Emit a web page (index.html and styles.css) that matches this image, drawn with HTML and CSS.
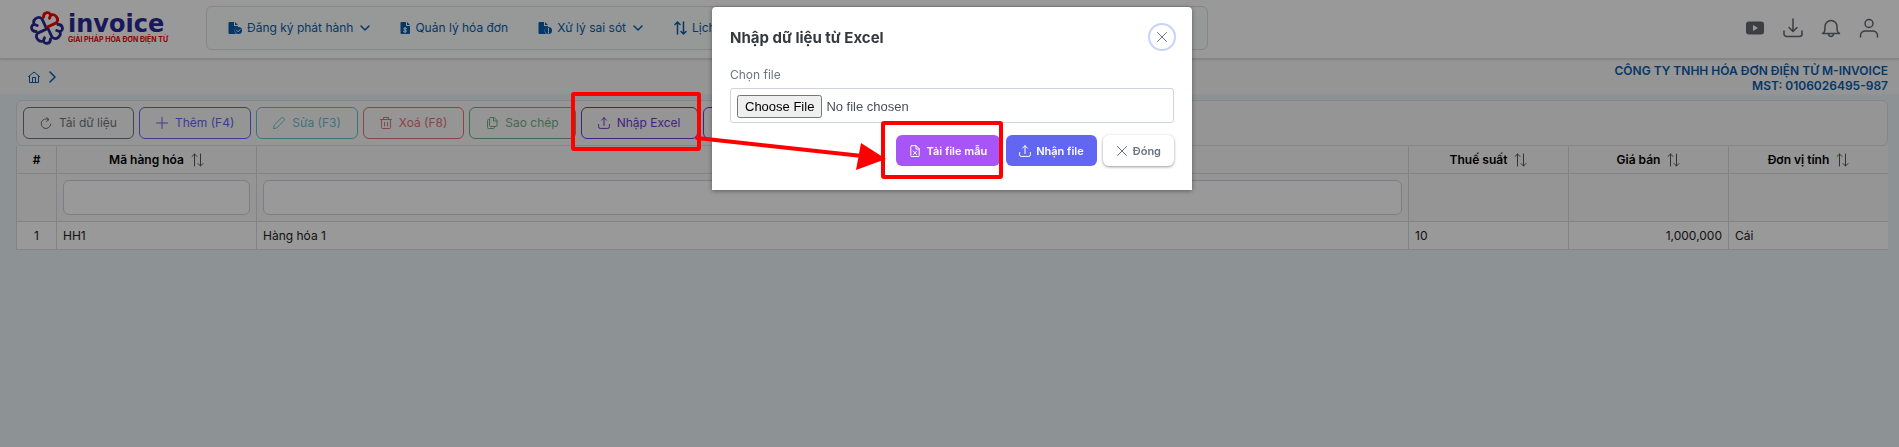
FILE: index.html
```html
<!DOCTYPE html>
<html lang="vi">
<head>
<meta charset="utf-8">
<title>M-Invoice</title>
<link rel="stylesheet" href="styles.css">
</head>
<body>
<svg class="defs" aria-hidden="true">
  <symbol id="upload" viewBox="0 0 12 12"><path d="M6 8.500V.7M3.500 3.200 6 .7l2.500 2.500M.6 7.500v2.300a1.600 1.600 0 0 0 1.600 1.600h7.600a1.600 1.600 0 0 0 1.600-1.600V7.500"/></symbol>
  <symbol id="sort" viewBox="0 0 14 14"><path d="M4.500 13V1M2 3.500 4.500 1 7 3.500M10.500 1V13M8 10.500 10.500 13l2.500-2.500"/></symbol>
  <symbol id="down" viewBox="0 0 10 10"><path d="m1 3 4 4 4-4"/></symbol>
  <symbol id="cross" viewBox="0 0 12 12"><path d="m1.500 1.500 9 9m0-9-9 9"/></symbol>
</svg>

<header class="topbar">
  <a class="logo" href="#">
    <svg class="logo-mark" viewBox="-17 -17 34 34" aria-hidden="true">
      <path transform="rotate(110)" d="M-7-9C-9-14-3-17-1-13C2-17 9-13 7-8L0-1M-1-13V-10"/>
      <path transform="rotate(200)" d="M-7-9C-9-14-3-17-1-13C2-17 9-13 7-8L0-1M-1-13V-10"/>
      <path transform="rotate(290)" d="M-7-9C-9-14-3-17-1-13C2-17 9-13 7-8L0-1M-1-13V-10"/>
      <path class="hot" transform="rotate(20)" d="M-7-9C-9-14-3-17-1-13C2-17 9-13 7-8L0-1M-1-13V-10"/>
    </svg>
    <span class="logo-text"><b class="logo-name">invoice</b><span class="logo-tag">GIẢI PHÁP HÓA ĐƠN ĐIỆN TỬ</span></span>
  </a>
  <nav class="menu">
    <a href="#"><svg class="i14" viewBox="0 0 14 14" aria-hidden="true"><path class="solid" d="M1.500 1H6v4h4v1a4 4 0 0 0-2 7H1.500a1 1 0 0 1-1-1V2a1 1 0 0 1 1-1M7 1l3 3H7z"/><circle class="solid" cx="10.500" cy="9.500" r="3.500"/><path class="cut" d="m8.800 9.500 1.300 1.300 2-2.200"/></svg>Đăng ký phát hành<svg class="i10 chev"><use href="#down"/></svg></a>
    <a href="#"><svg class="i10t" viewBox="0 0 10 14" aria-hidden="true"><path class="solid" d="M1.500 1H6v4h4v7a1 1 0 0 1-1 1H1.500a1 1 0 0 1-1-1V2a1 1 0 0 1 1-1M7 1l3 3H7z"/><path class="cut" d="M6.500 7.500C5 6.500 3.500 7 3.700 8c.3 1 2.800.8 2.800 2 0 1-1.500 1.200-3 .4M5.100 6.500v5.500"/></svg>Quản lý hóa đơn</a>
    <a href="#"><svg class="i14" viewBox="0 0 14 14" aria-hidden="true"><path class="solid" d="M1.500 1H6v4h4v1a4 4 0 0 0-2 7H1.500a1 1 0 0 1-1-1V2a1 1 0 0 1 1-1M7 1l3 3H7z"/><circle class="solid" cx="10.500" cy="9.500" r="3.500"/><path class="cut" d="M10.500 7.300v2.700m0 1v1"/></svg>Xử lý sai sót<svg class="i10 chev"><use href="#down"/></svg></a>
    <a href="#"><svg class="i14 swap"><use href="#sort"/></svg>Lịch sử</a>
  </nav>
  <div class="tools">
    <button type="button" aria-label="Video"><svg viewBox="0 0 20 20"><rect class="solid" x="1" y="3.500" width="18" height="13" rx="3"/><path fill="#fff" stroke="none" d="m8 7 5 3-5 3z"/></svg></button>
    <button type="button" aria-label="Tải xuống"><svg viewBox="0 0 20 20"><path d="M10 1v12M6 9.500l4 4 4-4M1 13v3a2.500 2.500 0 0 0 2.500 2.500h13A2.500 2.500 0 0 0 19 16v-3"/></svg></button>
    <button type="button" aria-label="Thông báo"><svg viewBox="0 0 20 20"><path d="M1.500 15.500c2.500-1.500 2.500-3 2.500-7a6 6 0 0 1 12 0c0 4 0 5.500 2.500 7zM7.500 16c.3 3.300 4.700 3.300 5 0"/></svg></button>
    <button type="button" aria-label="Tài khoản"><svg viewBox="0 0 20 20"><circle cx="10" cy="5.500" r="4"/><path d="M1.500 19v-1.500C1.500 14.500 4 13 6.500 13h7c2.500 0 5 1.500 5 4.500V19"/></svg></button>
  </div>
</header>

<div class="crumbs">
  <nav class="path" aria-label="Đường dẫn">
    <a href="#" aria-label="Trang chủ"><svg class="i12" viewBox="0 0 12 12"><path d="M.5 5.500 6 1l5.500 4.500M1.500 5v6.500h9V5M4.500 11.500v-5h3v5"/></svg></a>
    <svg class="i12 arrow" viewBox="0 0 12 12" aria-hidden="true"><path d="m4 1 5 5-5 5"/></svg>
  </nav>
  <div class="company">CÔNG TY TNHH HÓA ĐƠN ĐIỆN TỬ M-INVOICE<br>MST: 0106026495-987</div>
</div>

<main class="content">
  <div class="actions">
    <button class="act gray" type="button"><svg class="i12" viewBox="0 0 12 12"><path d="M8.500 2.600A4.800 4.800 0 1 0 10.800 7M6.500.5l2.500 2-2.500 2"/></svg>Tải dữ liệu</button>
    <button class="act indigo" type="button"><svg class="i12" viewBox="0 0 12 12"><path d="M6 .5v11M.5 6h11"/></svg>Thêm (F4)</button>
    <button class="act cyan" type="button"><svg class="i12" viewBox="0 0 12 12"><path d="M.5 11.500 1.300 8 8.500.9c1.500-1.200 3.800 1 2.600 2.600L4 10.700z"/></svg>Sửa (F3)</button>
    <button class="act red" type="button"><svg class="i12" viewBox="0 0 12 12"><path d="M.5 2.500h11M3.500 2.500v-2h5v2M1.500 2.500v8a1 1 0 0 0 1 1h7a1 1 0 0 0 1-1v-8M4.500 5.500v3.500M7.500 5.500v3.500"/></svg>Xoá (F8)</button>
    <button class="act green" type="button"><svg class="i12" viewBox="0 0 12 12"><path d="M4.500.5H8L11 3.500v5a1 1 0 0 1-1 1H4.500a1 1 0 0 1-1-1v-7a1 1 0 0 1 1-1M7.500.5V4H11M3.500 2.500h-1a1 1 0 0 0-1 1v7a1 1 0 0 0 1 1h5a1 1 0 0 0 1-1v-1"/></svg>Sao chép</button>
    <button class="act purple" type="button"><svg class="i12"><use href="#upload"/></svg>Nhập Excel</button>
    <button class="act purple more" type="button" aria-label="Thêm thao tác"></button>
  </div>
  <table class="grid">
    <colgroup><col class="c-no"><col class="c-code"><col><col class="c-num"><col class="c-num"><col class="c-num"></colgroup>
    <thead>
      <tr><th>#</th><th>Mã hàng hóa<svg class="i14"><use href="#sort"/></svg></th><th></th><th>Thuế suất<svg class="i14"><use href="#sort"/></svg></th><th>Giá bán<svg class="i14"><use href="#sort"/></svg></th><th>Đơn vị tính<svg class="i14"><use href="#sort"/></svg></th></tr>
      <tr class="filters"><td></td><td><input type="text" aria-label="Lọc mã hàng hóa"></td><td><input type="text" aria-label="Lọc hàng hóa"></td><td></td><td></td><td></td></tr>
    </thead>
    <tbody>
      <tr><td class="mid">1</td><td>HH1</td><td>Hàng hóa 1</td><td>10</td><td class="right">1,000,000</td><td>Cái</td></tr>
    </tbody>
  </table>
</main>

<div class="overlay">
  <section class="modal" role="dialog" aria-labelledby="modal-title">
    <div class="modal-head">
      <h2 id="modal-title">Nhập dữ liệu từ Excel</h2>
      <button class="close" type="button" aria-label="Đóng"><svg class="i12"><use href="#cross"/></svg></button>
    </div>
    <label for="file">Chọn file</label>
    <input id="file" class="file" type="file">
    <div class="modal-foot">
      <button class="btn violet" type="button"><svg class="i12" viewBox="0 0 12 12"><path d="M2.500.7h4.700l3 3v7.100a.7.7 0 0 1-.7.700h-7a.7.7 0 0 1-.7-.7V1.400a.7.7 0 0 1 .7-.7M7 .7V4h3.200M4.300 6l3.400 3.700m0-3.700L4.300 9.700"/></svg>Tải file mẫu</button>
      <button class="btn blue" type="button"><svg class="i12"><use href="#upload"/></svg>Nhận file</button>
      <button class="btn plain" type="button"><svg class="i12"><use href="#cross"/></svg>Đóng</button>
    </div>
  </section>
</div>

<svg class="marks" aria-hidden="true">
  <rect x="573" y="94" width="126" height="55" rx="1"/>
  <rect x="883" y="123" width="118" height="54" rx="1"/>
  <path d="M697 138 862 156"/>
  <path class="head" d="M861 143 886 159 856 170z"/>
</svg>
</body>
</html>
```
FILE: styles.css
```css
* { box-sizing: border-box; }
body {
  margin: 0;
  min-height: 100vh;
  background: #ebf3f8;
  color: #222;
  font: 12px/18px Inter, "Liberation Sans", sans-serif;
}
a { color: inherit; text-decoration: none; }
button, input { font: inherit; color: inherit; }
svg { flex: none; fill: none; stroke: currentColor; stroke-width: 1; stroke-linecap: round; stroke-linejoin: round; }
.defs { position: absolute; width: 0; height: 0; }
.solid { fill: currentColor; stroke: none; }
.cut { stroke: #fff; }
.i10 { width: 10px; height: 10px; }
.i10t { width: 10px; height: 14px; }
.i12 { width: 12px; height: 12px; }
.i14 { width: 14px; height: 14px; }

.topbar {
  display: flex;
  align-items: center;
  height: 59px;
  padding: 0 16px 2px 30px;
  background: #fff;
  border-bottom: 1px solid #dcdcdc;
  box-shadow: 0 1px 2px #0002;
  position: relative;
}
.logo { display: flex; align-items: center; width: 176px; }
.logo-mark { width: 34px; height: 34px; stroke: #2b2b94; stroke-width: 2.8; }
.hot { stroke: #f00000; }
.logo-text { display: flex; flex-direction: column; margin-left: 4px; padding-top: 1px; white-space: nowrap; }
.logo-name { font: bold 24px/22px "DejaVu Sans", sans-serif; color: #2b2b94; }
.logo-tag { font-size: 7px; line-height: 9px; font-weight: 700; color: #f00000; }
.menu {
  display: flex;
  align-items: center;
  flex: 0 1 1002px;
  gap: 30px;
  height: 44px;
  padding: 0 21px;
  border: 1px solid #dce1e1;
  border-radius: 6px;
  background: #fafffe;
  color: #0b5cab;
  white-space: nowrap;
}
.menu a { display: flex; align-items: center; gap: 5px; }
.menu .chev { margin-left: 2px; stroke-width: 1.5; }
.menu .swap { stroke-width: 1.5; }
.tools { display: flex; gap: 10px; margin-left: auto; color: #64686e; }
.tools button { display: flex; padding: 4px; border: 0; background: none; }
.tools svg { width: 20px; height: 20px; stroke-width: 1.5; }

.crumbs {
  display: flex;
  align-items: center;
  justify-content: space-between;
  height: 35px;
  padding: 0 11px 0 28px;
  background: #f9f9f9;
  color: #0b5cab;
}
.path { display: flex; align-items: center; gap: 6px; }
.path a { display: flex; }
.path .arrow { stroke-width: 1.5; }
.company { line-height: 15px; font-weight: 600; text-align: right; padding-top: 2px; }

.content { padding: 6px 11px 0 16px; }
.actions {
  display: flex;
  gap: 5px;
  padding: 6px;
  border: 1px solid #dde2e6;
  border-radius: 6px;
  background: #f9f9f9;
}
.act {
  display: flex;
  align-items: center;
  gap: 7px;
  height: 32px;
  padding: 0 16px;
  border: 1px solid;
  border-radius: 6px;
  background: none;
  white-space: nowrap;
}
.more { width: 110px; }
.gray { color: #6c757d; }
.indigo { color: #6366f1; }
.cyan { color: #68c0d0; }
.red { color: #e87078; }
.green { color: #70b080; }
.purple { color: #7038d0; }

.grid { width: 100%; table-layout: fixed; border-collapse: separate; border-spacing: 0; line-height: 15px; background: #fff; }
.c-no { width: 40px; }
.c-code { width: 200px; }
.c-num { width: 160px; }
.grid th, .grid td { height: 28px; padding: 0 6px; border: 1px solid #d8dce0; border-top: 0; border-right: 0; }
.grid th { font-weight: 600; color: #000; }
.grid thead { background: #f9f9f9; }
.grid th svg { margin-left: 6px; vertical-align: middle; color: #555; }
.grid .filters td { height: 48px; }
.grid input { display: block; width: 100%; height: 35px; border: 1px solid #ced4da; border-radius: 6px; background: #fff; }
.grid .mid { text-align: center; }
.grid .right { text-align: right; }

.overlay {
  position: fixed;
  inset: 0;
  display: flex;
  justify-content: center;
  align-items: flex-start;
  padding: 7px 0 0 5px;
  background: rgba(0, 0, 0, .4);
}
.modal {
  width: 480px;
  padding: 16px 18px 24px;
  border-radius: 4px 4px 0 0;
  background: #fff;
  box-shadow: 0 1px 5px #0006;
  color: #6c757d;
}
.modal-head { display: flex; align-items: center; justify-content: space-between; }
.modal h2 { margin: 0; padding-top: 2px; font-size: 15px; line-height: 20px; font-weight: 700; color: #343a40; }
.close {
  display: grid;
  place-items: center;
  width: 28px;
  height: 28px;
  margin-right: -2px;
  padding: 0;
  border: 2px solid #c7d2fe;
  border-radius: 50%;
  background: #fff;
}
.modal label { display: block; margin: 15px 0 4px; }
.file {
  display: block;
  width: 100%;
  height: 35px;
  padding: 6px;
  border: 1px solid #ced4da;
  border-radius: 3px;
  color: #495057;
  font: 13px "Liberation Sans", sans-serif;
}
.file::file-selector-button { padding: 2px 6px; font: 13px "Liberation Sans", sans-serif; }
.modal-foot { display: flex; justify-content: flex-end; gap: 6px; margin-top: 12px; }
.btn {
  display: flex;
  align-items: center;
  gap: 5px;
  height: 31px;
  padding: 0 13px;
  border: 0;
  border-radius: 6px;
  color: #fff;
  font-size: 11px;
  font-weight: 600;
}
.violet { background: #a855f7; }
.blue { background: #6366f1; }
.plain { background: #fff; color: #6c757d; box-shadow: 0 1px 3px #0006; }

.marks { position: absolute; top: 0; left: 0; width: 1010px; height: 190px; stroke: #f00; stroke-width: 4; pointer-events: none; }
.marks .head { fill: #f00; stroke: none; }
```
